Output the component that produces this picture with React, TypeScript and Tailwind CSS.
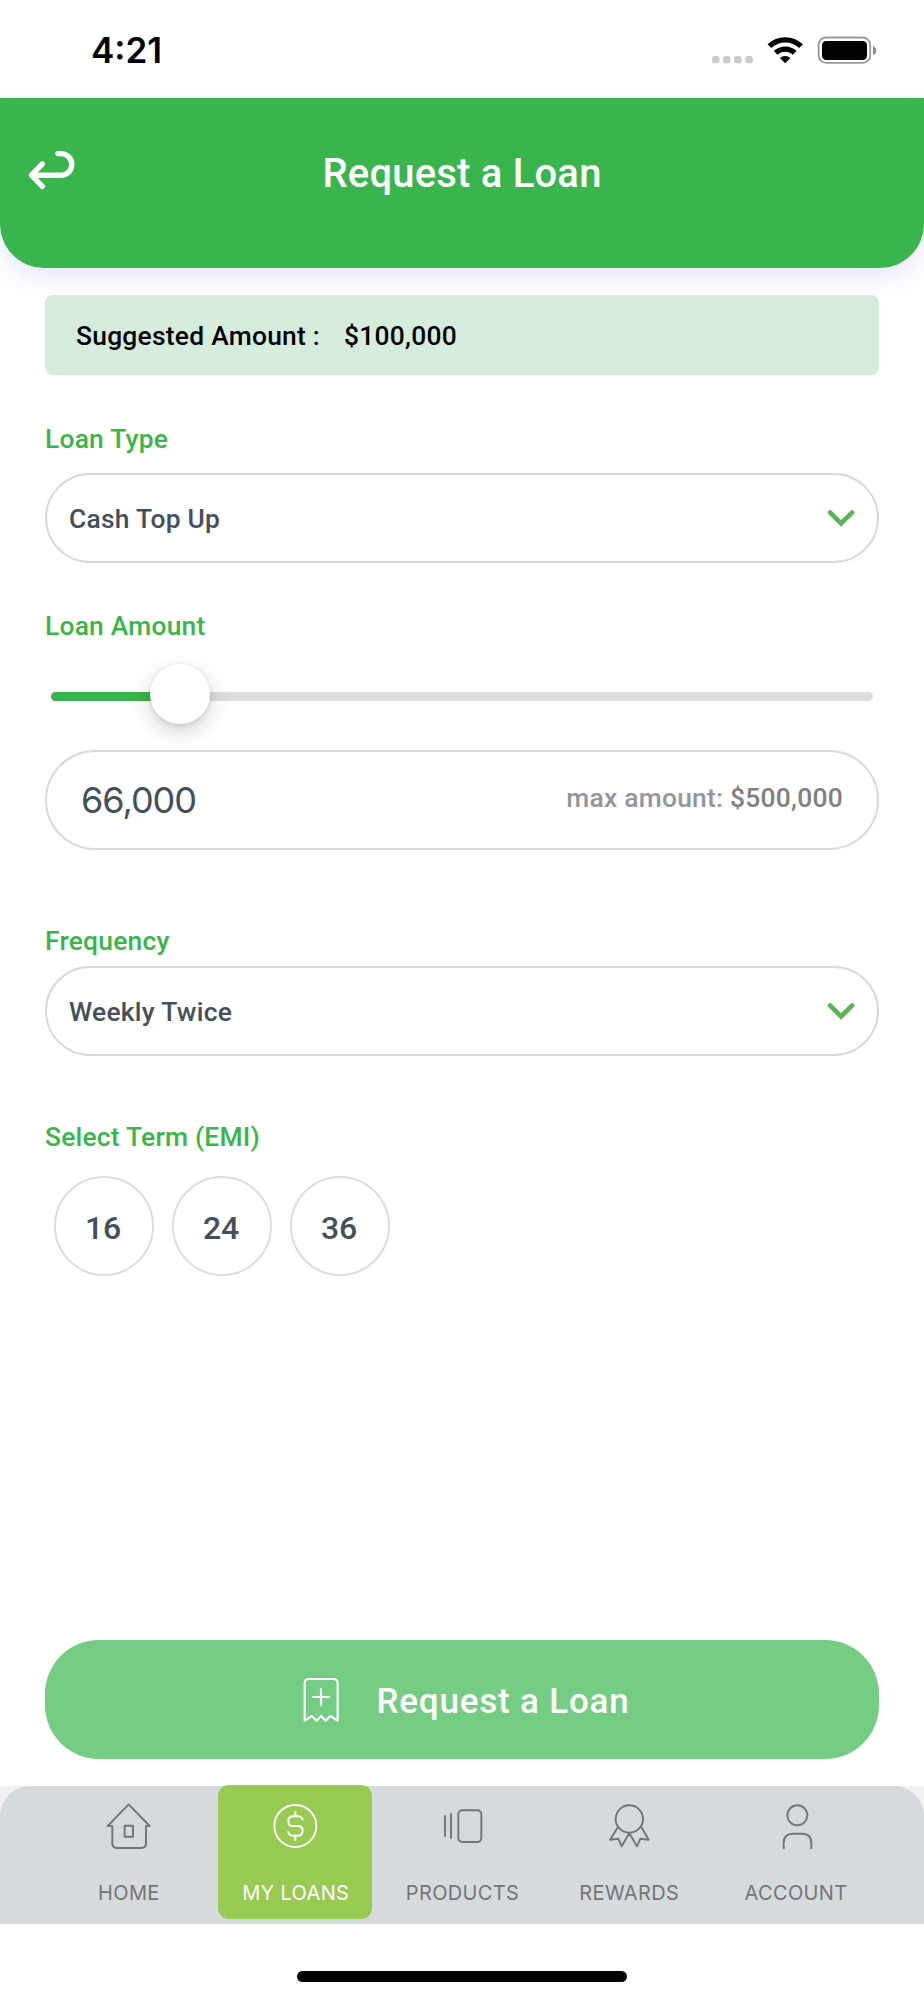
import type { ReactNode } from "react";

const roboto = "font-['Roboto',sans-serif]";
const inter = "font-['Inter',sans-serif]";

function StatusBar() {
  return (
    <div className="flex h-[98px] items-start justify-between pl-[91px] pr-[48px]">
      <span className={`${inter} mt-[29px] text-[35px] leading-[42px] font-semibold text-black`}>4:21</span>
      <svg className="mt-[32px] h-9 w-[166px]" viewBox="710 32 166 36" fill="none">
        <g fill="#cbcbcb">
          <rect x="712" y="56" width="7.5" height="7.3" rx="2.6" />
          <rect x="723" y="56" width="7.5" height="7.3" rx="2.6" />
          <rect x="734" y="56" width="7.5" height="7.3" rx="2.6" />
          <rect x="745.3" y="56" width="7.5" height="7.3" rx="2.6" />
        </g>
        <g stroke="#000" strokeWidth="5.3">
          <path d="M769.4 46.2A22.9 22.9 0 0 1 801 46.2" />
          <path d="M775.7 52.9A13.6 13.6 0 0 1 794.7 52.9" />
        </g>
        <path d="M785.2 63.3L780 58a7.5 7.5 0 0 1 10.4 0Z" fill="#000" />
        <rect x="818.6" y="37.5" width="51.6" height="25.4" rx="7.5" stroke="#999" strokeWidth="1.8" />
        <rect x="822" y="41" width="45" height="19" rx="4.2" fill="#000" />
        <path d="M873 46c4.4 1.6 4.4 7.4 0 9Z" fill="#8c8c8c" />
      </svg>
    </div>
  );
}

function Header() {
  return (
    <header className="relative flex h-[170px] items-start justify-center rounded-b-[44px] bg-[#3ab54e] shadow-[0_10px_24px_rgba(80,80,255,0.13)]">
      <svg className="absolute top-[48px] left-[24px] h-[48px] w-[56px]" viewBox="24 146 56 48" fill="none" stroke="#fff" strokeWidth="5.4" strokeLinecap="round" strokeLinejoin="round">
        <path d="M42.3 163.8L31.5 175.2L42.3 186.3M31.5 175.2H61a10.8 10.8 0 0 0 0-21.6H58" />
      </svg>
      <h1 className={`${roboto} mt-[52px] text-[40px] leading-[48px] font-medium tracking-[0.2px] text-white`}>Request a Loan</h1>
    </header>
  );
}

function Label({ children }: { children: ReactNode }) {
  return <div className={`${roboto} h-8 text-[26.4px] leading-8 font-medium tracking-[0.22px] text-[#39b54a]`}>{children}</div>;
}

function Select({ value }: { value: string }) {
  return (
    <div className="flex h-[90px] items-center justify-between rounded-full border-2 border-[#d6dadd] bg-white pr-[22px] pl-[22px]">
      <span className={`${roboto} mt-px text-[26.4px] leading-8 font-medium tracking-[0.25px] text-[#454f59]`}>{value}</span>
      <svg className="h-[19px] w-[28px]" viewBox="0 0 28 19" fill="none" stroke="#5cb35a" strokeWidth="4.8" strokeLinecap="round">
        <path d="M3.2 3.6L14.1 14.4L25 3.6" />
      </svg>
    </div>
  );
}

const icons: Record<string, ReactNode> = {
  HOME: (
    <>
      <path d="M74 7L11 72H25V124Q25 138 39 138H112Q126 138 126 124V72H137Z" />
      <rect x="62" y="71" width="25" height="33" />
    </>
  ),
  "MY LOANS": (
    <>
      <circle cx="73" cy="72" r="63" />
      <path d="M95 55Q93 43 80 43H66Q52 43 52 57.500T66 72H80Q95 72 95 86.500T80 101H67Q53 101 51 88M73 28V43M73 101V116" />
    </>
  ),
  PRODUCTS: (
    <>
      <path d="M21 40V104M39 34V110" />
      <rect x="61" y="25" width="69" height="95" rx="12" />
    </>
  ),
  REWARDS: (
    <>
      <circle cx="73" cy="51" r="41" />
      <path d="M39 75L15 113L40 110L50 133L73 94L96 133L106 110L131 113L109 75" />
    </>
  ),
  ACCOUNT: (
    <>
      <circle cx="76" cy="40" r="30" />
      <path d="M35 141V123Q35 95 63 95H90Q118 95 118 123V141" />
    </>
  ),
};

function NavItem({ label, active = false }: { label: string; active?: boolean }) {
  return (
    <div className="flex flex-1 justify-center">
      <div className={`-mt-px flex h-[134px] w-[154px] flex-col items-center rounded-[11px] pt-[17px] ${active ? "bg-[#99ca53] text-white" : "text-[#757575]"}`}>
        <svg className="h-12 w-12 overflow-visible" viewBox="0 0 144 144" fill="none" stroke="currentColor" strokeWidth="5.8" strokeLinejoin="round">
          {icons[label]}
        </svg>
        <span className={`${inter} mt-[31px] ml-px text-[20px] leading-6 tracking-[0.35px] whitespace-nowrap`}>{label}</span>
      </div>
    </div>
  );
}

export default function App() {
  return (
    <div className="flex h-[2000px] w-[924px] flex-col overflow-hidden bg-white">
      <StatusBar />
      <Header />
      <main className="flex h-[1518px] flex-col px-[45px]">
        <div className={`${roboto} relative mt-[27px] flex h-20 items-center gap-6 rounded-lg bg-[#d6eddd] pt-px pl-[31px] text-[26.4px] leading-8 font-medium tracking-[0.25px] text-black`}>
          <span>Suggested Amount :</span>
          <span>$100,000</span>
        </div>

        <div className="mt-[48px] mb-[18px]"><Label>Loan Type</Label></div>
        <Select value="Cash Top Up" />

        <div className="mt-[47px]"><Label>Loan Amount</Label></div>
        <div className="relative mx-[6px] mt-[50px] h-[9px] rounded-full bg-[#dcdddf]">
          <div className="h-full w-[129px] rounded-full bg-[#3ab54e]" />
          <div className="absolute top-[-28px] left-[99px] h-[60px] w-[60px] rounded-full bg-white shadow-[0_8px_22px_rgba(0,0,0,0.16),0_2px_6px_rgba(0,0,0,0.12)]" />
        </div>
        <div className="mt-[49px] flex h-[100px] items-center justify-between rounded-full border-2 border-[#d6dadd] pr-[34px] pl-[34px]">
          <span className={`${inter} text-[36px] leading-[44px] tracking-[-1px] text-[#454f59]`}>66,000</span>
          <span className={`${roboto} mb-[5px] text-[26.4px] leading-8 font-medium tracking-[0.25px] text-[#92969c]`}>
            max amount: <span className="text-[#808080]">$500,000</span>
          </span>
        </div>

        <div className="mt-[75px] mb-[9px]"><Label>Frequency</Label></div>
        <Select value="Weekly Twice" />

        <div className="mt-[65px]"><Label>Select Term (EMI)</Label></div>
        <div className="mt-[23px] ml-[9px] flex gap-[18px]">
          {["16", "24", "36"].map((term) => (
            <div key={term} className={`${roboto} flex h-[100px] w-[100px] items-center justify-center rounded-full border-2 border-[#dcdddf] pt-1 pr-0.5 text-[32px] leading-9 font-medium tracking-[-0.3px] text-[#454f59]`}>
              {term}
            </div>
          ))}
        </div>

        <button className="mt-auto mb-[27px] flex h-[119px] items-center justify-center rounded-[54px] bg-[#75cd83] pl-2 text-white">
          <svg className="mr-[36px] h-[48px] w-[38px]" viewBox="186 136 114 144" fill="none" stroke="#fff" strokeWidth="6.5" strokeLinejoin="round" strokeLinecap="round">
            <path d="M194 270V158Q194 145 207 145H280Q293 145 293 158V270L271 256L257 270L243 256L230 270L215 256ZM219 199H267M243 175V223" />
          </svg>
          <span className={`${roboto} mt-1 text-[35px] leading-10 font-medium tracking-[0.8px]`}>Request a Loan</span>
        </button>
      </main>
      <div className="h-[138px] bg-[#f1f1f1]">
        <nav className="flex h-full rounded-t-[30px] bg-[#d6dadd] px-[45px]">
          <NavItem label="HOME" />
          <NavItem label="MY LOANS" active />
          <NavItem label="PRODUCTS" />
          <NavItem label="REWARDS" />
          <NavItem label="ACCOUNT" />
        </nav>
      </div>
      <div className="flex justify-center pt-[47px]">
        <div className="h-[11px] w-[330px] rounded-full bg-black" />
      </div>
    </div>
  );
}
